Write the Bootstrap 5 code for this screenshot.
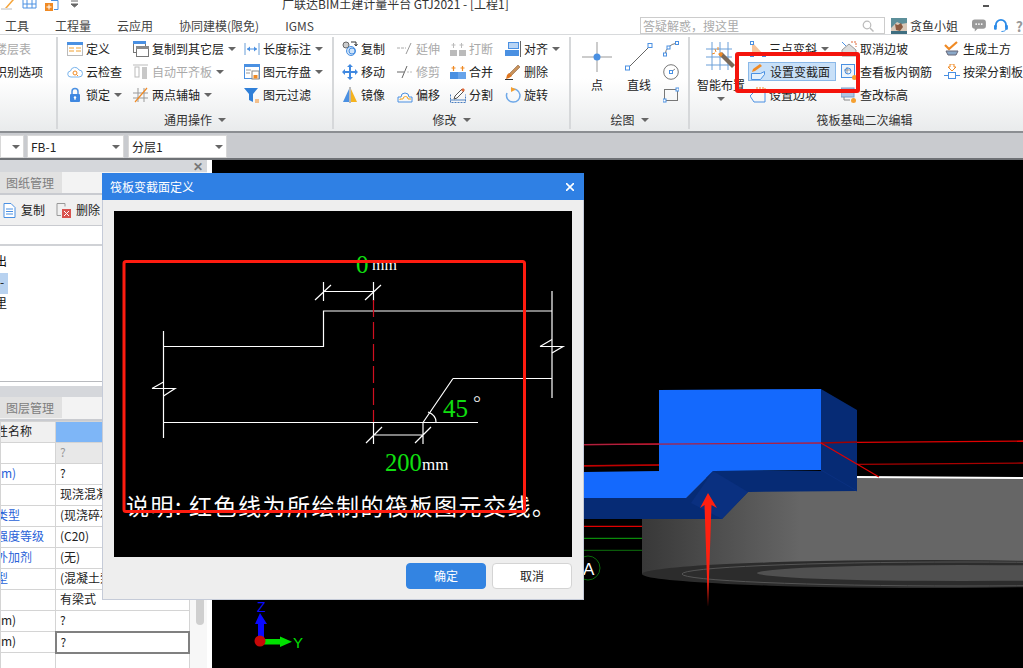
<!DOCTYPE html>
<html lang="zh-CN">
<head>
    <meta charset="UTF-8">
    <meta name="viewport" content="width=device-width, initial-scale=1.0">
    <link href="https://cdn.jsdelivr.net/npm/bootstrap@5.3.5/dist/css/bootstrap.min.css" rel="stylesheet">
    <title>广联达BIM土建计量平台 GTJ2021</title>

    <style>
        html, body { height: 100%; }
        body {
            font-family: "Noto Sans CJK SC", "Liberation Sans", sans-serif;
            font-size: 12px;
            line-height: 16px;
            color: #222;
            background: #fff;
            overflow: hidden;
        }
        .app { width: 1023px; height: 668px; position: relative; overflow: hidden; }

        /* title + menu */
        .title-row { height: 17px; position: relative; }
        .qa-icons { width: 282px; height: 10px; gap: 8px; }
        .qa-icons svg { flex: none; }
        .title-text { line-height: 8px; color: #333; white-space: nowrap; }
        .min-dash { width: 6px; height: 2px; background: #555; margin: 5px 0 0 474px; }
        .menu-row { height: 17px; padding-left: 5px; gap: 26px; color: #444; }
        .right-tools { margin-left: auto; width: 383px; flex: none; }
        .search-box { width: 245px; height: 17px; border: 1px solid #ccc; padding-right: 10px; flex: none; }
        .search-box input { border: 0; padding: 0 2px; height: 15px; font-size: 12px; line-height: 15px; box-shadow: none; border-radius: 0; background: transparent; }
        .search-box input::placeholder { color: #aaa; }
        .search-box svg { flex: none; }
        .avatar-pic { margin: 0 3px 0 6px; flex: none; }
        .user-name { font-size: 12px; color: #333; width: 62px; flex: none; }
        .help-mark { color: #999; font-weight: 700; font-size: 14px; margin-left: 8px; }

        /* ribbon */
        .ribbon { height: 99px; background: linear-gradient(#fff 45%, #e9ebec); border-top: 1px solid #d8dadc; border-bottom: 2px solid #8b8e92; }
        .rb-group { border-right: 2px solid #d6d8da; flex: none; height: 92px; margin-top: 2px; }
        .rb-cols { height: 71px; }
        .rb-col { flex: none; }
        .rb-item { height: 23px; gap: 3px; white-space: nowrap; }
        .rb-item.off { color: #a9a9a9; }
        .ic { width: 16px; height: 16px; flex: none; }
        .rb-label { height: 24px; gap: 3px; color: #333; }
        .rb-big { flex: none; padding-top: 5px; }
        .rb-big svg { width: 30px; height: 30px; margin-bottom: 5px; }
        .caret-dn { width: 0; height: 0; border-left: 4px solid transparent; border-right: 4px solid transparent; border-top: 4px solid #666; flex: none; margin-left: 1px; }
        .rb-label .caret-dn { margin-left: 3px; }
        .rb-on { background: #c8e0f8; border: 1px solid #8ab8e8; height: 19px; margin: 2px 0; width: 88px; }
        .g0 { width: 58px; overflow: hidden; }
        .g1 { width: 276px; }
        .g2 { width: 237px; }
        .g3 { width: 119px; }
        .g4 { width: 333px; border-right: 0; }
        .pl-g1 { padding-left: 9px; }
        .pl-g2 { padding-left: 8px; }
        .w-66 { width: 66px; }
        .w-111 { width: 111px; }
        .w-55 { width: 55px; }
        .w-53 { width: 53px; }
        .w-52 { width: 52px; }
        .w-32 { width: 32px; }
        .w-58 { width: 58px; padding-left: 4px; }
        .w-93 { width: 93px; }
        .w-103 { width: 103px; }
        .ml-8 { margin-left: 8px; }
        .pl-2px .rb-item { padding-left: 2px; }
        .lbl-shift { padding-left: 16px; }
        .cut-l { margin-left: -5px; }
        .mark-box { position: absolute; left: 735px; top: 52px; width: 125px; height: 41px; border: 4px solid #f4140c; border-radius: 3px; }

        /* combo strip */
        .combo-strip { height: 27px; background: #c9cbcf; border-bottom: 2px solid #6f7276; padding-top: 2px; gap: 4px; }
        .combo-box { height: 23px; background: #fff; border: 1px solid #d8d8d8; padding: 0 3px; color: #222; flex: none; }
        .combo-a { width: 24px; }
        .combo-b { width: 97px; margin-left: -1px; }
        .combo-c { width: 99px; }

        /* left panel */
        .main-row { height: 508px; }
        .left-panel { width: 212px; flex: none; background: #fff; }
        .dock-head { height: 12px; width: 207px; background: #d5d7db; font-size: 12px; line-height: 12px; color: #777; padding-right: 4px; font-weight: 700; }
        .tab-bar { height: 23px; width: 207px; background: #f3f3f3; border-bottom: 2px solid #c9cbd0; }
        .tab-one { width: 62px; height: 21px; background: #e1e1e1; color: #7d7d7d; padding-left: 6px; line-height: 21px; font-size: 12px; }
        .tool-bar { height: 31px; width: 207px; background: #f0f0f0; border-bottom: 1px solid #c9cbd0; padding-left: 3px; }
        .tool-bar .rb-item { gap: 5px; margin-right: 11px; }
        .blank-row { height: 20px; width: 207px; border-bottom: 2px solid #d0d2d6; }
        .tree-box { height: 136px; width: 207px; border-bottom: 1px solid #b8babe; padding-top: 6px; color: #111; }
        .tree-row { height: 21px; line-height: 17px; overflow: hidden; }
        .tree-on { background: #b8d2f0; width: 8px; }
        .gap-row { height: 4px; }
        .dock-head2 { height: 11px; width: 207px; background: #d5d7db; }
        .tab-bar2 { height: 24px; }
        .prop-wrap { height: 247px; }
        .prop-tbl { width: 190px; table-layout: fixed; font-size: 12px; border-color: #d4d4d4; margin: 0; flex: none; }
        .prop-tbl td { height: 21px; padding: 0 0 0 4px; line-height: 18px; white-space: nowrap; overflow: hidden; color: #222; }
        .prop-tbl td:first-child { padding-left: 0; }
        .prop-tbl .name-col { width: 55px; }
        .prop-tbl .link-name { color: #2a62d8; }
        .prop-tbl .head-name { background: #f0f0f0; }
        .prop-tbl .head-val { background: #7eb6f7; }
        .prop-tbl .grey-cell { background: #e8e8e8; color: #999; }
        .prop-tbl .cell-sel { border: 2px solid #808080 !important; }
        .prop-tbl .tail-row td { height: 20px; }
        .scroll-col { width: 17px; padding-left: 6px; background: #f7f7f7; flex: none; }
        .scroll-thumb { width: 8px; height: 204px; background: #cfcfcf; border-radius: 0 0 4px 4px; }

        /* canvas */
        .view-3d { flex: 1 1 auto; background: #000; }
        .view-3d svg { display: block; }
        .t-axis { font-family: "Liberation Sans", sans-serif; }

        /* dialog */
        .dlg { position: absolute; left: 102px; top: 173px; width: 482px; height: 427px; background: #eeeeee; border: 1px solid #c5cbd8; border-radius: 0; border-top: 0; }
        .dlg .card-header { height: 27px; padding: 0 10px 0 8px; background: #2f80e4; color: #fff; border: 0; border-radius: 0; margin: 0 -1px; line-height: 27px; }
        .dlg .card-body { padding: 11px 11px 0; flex: none; }
        .dlg-draw { display: block; background: #000; }
        .dlg-foot { padding: 6px 11px 0 0; gap: 6px; }
        .dlg-foot .btn { width: 80px; height: 26px; padding: 0; font-size: 12px; line-height: 24px; border-radius: 4px; }
        .btn-ok { background: #3384e2; border-color: #3384e2; color: #fff; }
        .btn-no { background: #fff; border-color: #d4d4d4; color: #222; }
        .draw-line { stroke: #fff; stroke-width: 1.2; fill: none; }
        .t-serif { font-family: "Liberation Serif", serif; }
        .t-note { font-family: "Noto Sans CJK SC", "Liberation Serif", serif; font-size: 23px; letter-spacing: 1.5px; fill: #fff; }
    </style>
</head>
<body>
<div class="app">

    <!-- title row, cut off at the top of the shot -->
    <div class="title-row d-flex">
        <div class="qa-icons d-flex">
            <svg width="14" height="10" viewBox="0 0 14 10"><path d="M1 9h11" stroke="#bbb"/><path d="M5 8l7-8h2l-7 8z" fill="#f5a43a"/></svg>
            <svg width="15" height="10" viewBox="0 0 15 10"><path d="M1 0v8h13V0M5 0v8M10 0v8M1 4h13" fill="none" stroke="#4a90e2"/></svg>
            <svg width="14" height="11" viewBox="0 0 14 11"><path d="M6 .5h7v9H9" fill="none" stroke="#4a90e2"/><rect x="0" y="3" width="8" height="8" fill="#f08a24"/><path d="M4 4.5v5M1.5 7h5" stroke="#fff"/></svg>
            <svg width="8" height="10" viewBox="0 0 8 10" class="ms-1"><path d="M0 1h7M0 4l3.5 3L7 4z" fill="#666" stroke="#666"/></svg>
        </div>
        <div class="title-text">广联达BIM土建计量平台 GTJ2021 - [工程1]</div>
        <div class="min-dash"></div>
    </div>

    <!-- menu -->
    <div class="menu-row d-flex align-items-center">
        <span>工具</span><span>工程量</span><span>云应用</span><span>协同建模(限免)</span><span>IGMS</span>
        <div class="right-tools d-flex align-items-center">
            <div class="search-box d-flex align-items-center">
                <input class="form-control" type="text" placeholder="答疑解惑，搜这里">
                <svg width="12" height="12" viewBox="0 0 12 12"><circle cx="5" cy="5" r="3.8" fill="none" stroke="#bbb" stroke-width="1.2"/><path d="M8 8l3.5 3.5" stroke="#bbb" stroke-width="1.5"/></svg>
            </div>
            <svg width="16" height="16" viewBox="0 0 16 16" class="avatar-pic"><rect width="16" height="16" fill="#5c8f9a"/><path d="M0 10l6-6 4 2 6-1v11H0z" fill="#d8c8b8"/><path d="M4 6l3 1 3-2 2 4-3 4-4-1z" fill="#8a5a40"/><rect y="13" width="16" height="3" fill="#3e6e80"/></svg>
            <span class="user-name">贪鱼小姐</span>
            <svg width="15" height="13" viewBox="0 0 15 13"><path d="M3 0h9a3 3 0 013 3v4a3 3 0 01-3 3H6l-3 3v-3a3 3 0 01-3-3V3a3 3 0 013-3z" fill="#999"/><circle cx="4.5" cy="5" r="1" fill="#fff"/><circle cx="7.5" cy="5" r="1" fill="#fff"/><circle cx="10.5" cy="5" r="1" fill="#fff"/></svg>
            <svg width="15" height="15" viewBox="0 0 15 15" class="ms-2"><path d="M2 9V7a5.5 5.5 0 0111 0v2" fill="none" stroke="#2b8be8" stroke-width="2"/><rect x="0" y="7" width="3" height="5" rx="1" fill="#2b8be8"/><rect x="12" y="7" width="3" height="5" rx="1" fill="#2b8be8"/><path d="M13 11c0 2-2 3-5 3" fill="none" stroke="#2b8be8"/></svg>
            <span class="help-mark">?</span>
        </div>
    </div>

    <!-- ribbon -->
    <div class="ribbon d-flex position-relative">
        <div class="rb-group g0">
            <div class="rb-item off d-flex align-items-center"><span class="cut-l">楼层表</span></div>
            <div class="rb-item d-flex align-items-center"><span class="cut-l">识别选项</span></div>
        </div>

        <div class="rb-group g1">
            <div class="rb-cols d-flex pl-g1">
                <div class="rb-col w-66">
                    <div class="rb-item d-flex align-items-center">
                        <svg class="ic" viewBox="0 0 16 16"><rect x=".5" y="1.5" width="15" height="13" fill="#fff" stroke="#bbb"/><rect y="1" width="16" height="3" fill="#4a90e2"/><path d="M2 7h5M2 10h5M9 7h5M9 10h5" stroke="#f0a030"/></svg>定义
                    </div>
                    <div class="rb-item d-flex align-items-center">
                        <svg class="ic" viewBox="0 0 16 16"><path d="M4 13a3 3 0 01-.5-6A4.5 4.5 0 0112 6a3.5 3.5 0 010 7z" fill="#fff" stroke="#7ab4ec"/><circle cx="8" cy="9" r="2" fill="none" stroke="#f08a24"/><path d="M9.5 10.5l1.5 1.5" stroke="#f08a24"/></svg>云检查
                    </div>
                    <div class="rb-item d-flex align-items-center">
                        <svg class="ic" viewBox="0 0 16 16"><path d="M5 7V4.5a3 3 0 016 0V7" fill="none" stroke="#4a90e2" stroke-width="1.5"/><rect x="3" y="7" width="10" height="8" rx="1" fill="#3f88e0"/><circle cx="8" cy="10.5" r="1.2" fill="#fff"/><path d="M8 11v2" stroke="#fff"/></svg>锁定<span class="caret-dn"></span>
                    </div>
                </div>
                <div class="rb-col w-111">
                    <div class="rb-item d-flex align-items-center">
                        <svg class="ic" viewBox="0 0 16 16"><rect x=".5" y=".5" width="12" height="11" fill="#fff" stroke="#777"/><rect width="13" height="3" fill="#4a90e2"/><rect x="3.5" y="5.5" width="12" height="10" fill="#fff" stroke="#777"/><rect x="3" y="5" width="13" height="3" fill="#8a8a8a"/></svg>复制到其它层<span class="caret-dn"></span>
                    </div>
                    <div class="rb-item off d-flex align-items-center">
                        <svg class="ic" viewBox="0 0 16 16"><path d="M0 1h15" stroke="#bbb"/><rect x="2" y="3" width="4" height="10" fill="#fff" stroke="#bbb"/><rect x="9" y="3" width="5" height="12" fill="#c8c8c8"/></svg>自动平齐板<span class="caret-dn"></span>
                    </div>
                    <div class="rb-item d-flex align-items-center">
                        <svg class="ic" viewBox="0 0 16 16"><path d="M0 6h15M0 11h15M5 1v14M11 1v14" stroke="#999"/><path d="M2 15L14 1" stroke="#f08a24" stroke-width="1.2"/></svg>两点辅轴<span class="caret-dn"></span>
                    </div>
                </div>
                <div class="rb-col">
                    <div class="rb-item d-flex align-items-center">
                        <svg class="ic" viewBox="0 0 16 16"><path d="M1 2v12M15 2v12" stroke="#6a9fd8"/><path d="M3 8h10" stroke="#4a90e2"/><path d="M3 8l3-2.5v5zM13 8l-3-2.5v5z" fill="#4a90e2"/></svg>长度标注<span class="caret-dn"></span>
                    </div>
                    <div class="rb-item d-flex align-items-center">
                        <svg class="ic" viewBox="0 0 16 16"><rect x=".5" y=".5" width="15" height="14" fill="#fff" stroke="#4a90e2"/><rect width="16" height="3" fill="#4a90e2"/><path d="M2 6h5M2 9h4" stroke="#999"/><rect x="8" y="7" width="7" height="8" fill="#fff" stroke="#888"/><rect x="9.5" y="11" width="4" height="3.5" fill="#f08a24"/></svg>图元存盘<span class="caret-dn"></span>
                    </div>
                    <div class="rb-item d-flex align-items-center">
                        <svg class="ic" viewBox="0 0 16 16"><path d="M0 1h14L9 7v8L5 13V7z" fill="#2f7fd8"/><path d="M11 13h4M11 15h4" stroke="#f08a24" stroke-width="1.2"/></svg>图元过滤
                    </div>
                </div>
            </div>
            <div class="rb-label d-flex align-items-center justify-content-center">通用操作<span class="caret-dn"></span></div>
        </div>

        <div class="rb-group g2">
            <div class="rb-cols d-flex pl-g2">
                <div class="rb-col w-55">
                    <div class="rb-item d-flex align-items-center">
                        <svg class="ic" viewBox="0 0 16 16"><circle cx="4" cy="4" r="3" fill="#ccc" stroke="#666"/><circle cx="9" cy="10" r="4.5" fill="#cfe3f8" stroke="#4a90e2"/><circle cx="10" cy="10" r="3" fill="none" stroke="#4a90e2"/><path d="M9 1h5v3M12.5 3L14 5l1.5-2" fill="none" stroke="#333"/></svg>复制
                    </div>
                    <div class="rb-item d-flex align-items-center">
                        <svg class="ic" viewBox="0 0 16 16"><path d="M8 0l3 3H9v4h4V5l3 3-3 3V9H9v4h2l-3 3-3-3h2V9H3v2L0 8l3-3v2h4V3H5z" fill="#3f88e0"/></svg>移动
                    </div>
                    <div class="rb-item d-flex align-items-center">
                        <svg class="ic" viewBox="0 0 16 16"><path d="M7 2L1 15h6z" fill="#4a90e2"/><path d="M9 2l6 13H9z" fill="#f5b31f"/><path d="M8 0v16" stroke="#777"/></svg>镜像
                    </div>
                </div>
                <div class="rb-col w-53">
                    <div class="rb-item off d-flex align-items-center">
                        <svg class="ic" viewBox="0 0 16 16"><path d="M0 7h9" stroke="#aaa" stroke-dasharray="3 1"/><path d="M9 13L14 2" stroke="#999"/></svg>延伸
                    </div>
                    <div class="rb-item off d-flex align-items-center">
                        <svg class="ic" viewBox="0 0 16 16"><path d="M0 8h7" stroke="#666"/><path d="M10 8h6" stroke="#bbb" stroke-dasharray="2 1"/><path d="M5 14L10 2" stroke="#666"/></svg>修剪
                    </div>
                    <div class="rb-item d-flex align-items-center">
                        <svg class="ic" viewBox="0 0 16 16"><path d="M1 15V10h3a4 4 0 018 0h3v5z" fill="none" stroke="#4a90e2"/><path d="M3 13v-1h3a2.5 2.5 0 015 0h3" fill="none" stroke="#f5a623"/></svg>偏移
                    </div>
                </div>
                <div class="rb-col w-55">
                    <div class="rb-item off d-flex align-items-center">
                        <svg class="ic" viewBox="0 0 16 16"><rect y="9" width="7" height="6" fill="#bbb"/><rect x="9" y="9" width="7" height="6" fill="#bbb"/><path d="M3.5 2v5M11.5 2v5M1.5 4h4M9.5 4h4" stroke="#bbb"/></svg>打断
                    </div>
                    <div class="rb-item d-flex align-items-center">
                        <svg class="ic" viewBox="0 0 16 16"><rect y="8" width="8" height="7" fill="#4a90e2"/><rect x="8" y="8" width="8" height="7" fill="#68a4ea"/><path d="M3.5 2v5M12.5 2v5M1.5 4h4M10.5 4h4" stroke="#f08a24" stroke-width="1.2"/></svg>合并
                    </div>
                    <div class="rb-item d-flex align-items-center">
                        <svg class="ic" viewBox="0 0 16 16"><path d="M.5 7.5v8h15v-8" fill="none" stroke="#4a7fc0" stroke-dasharray="2 1"/><path d="M0 13h16" stroke="#4a7fc0"/><path d="M4 12l1-3 7-7 2 2-7 7z" fill="#fff" stroke="#555"/><path d="M11 3l2-2 2 2-2 2z" fill="#e06a3a"/></svg>分割
                    </div>
                </div>
                <div class="rb-col">
                    <div class="rb-item d-flex align-items-center">
                        <svg class="ic" viewBox="0 0 16 16"><rect x="3.5" y="1.5" width="10" height="6" fill="#b8d4f4" stroke="#4a90e2"/><rect y="9" width="14" height="6" fill="#4a90e2"/><path d="M15.5 0v16" stroke="#666"/></svg>对齐<span class="caret-dn"></span>
                    </div>
                    <div class="rb-item d-flex align-items-center">
                        <svg class="ic" viewBox="0 0 16 16"><path d="M4 10l9-9 2 2-9 9z" fill="#c9925a" stroke="#7a5230" stroke-width=".5"/><path d="M2 11l2-2 3 3-3 2-3 1z" fill="#e0761f"/><path d="M0 15.5h8" stroke="#333"/></svg>删除
                    </div>
                    <div class="rb-item d-flex align-items-center">
                        <svg class="ic" viewBox="0 0 16 16"><path d="M6 2.5A6.5 6.5 0 118 15a6.5 6.5 0 01-6-9" fill="none" stroke="#6ea8e8" stroke-width="1.5"/><path d="M6 0l5 2.5L6 5z" fill="#f5a030"/></svg>旋转
                    </div>
                </div>
            </div>
            <div class="rb-label d-flex align-items-center justify-content-center">修改<span class="caret-dn"></span></div>
        </div>

        <div class="rb-group g3">
            <div class="rb-cols d-flex">
                <div class="rb-big w-52 d-flex flex-column align-items-center">
                    <svg viewBox="0 0 30 30"><path d="M0 15h30M15 0v30" stroke="#999"/><circle cx="15" cy="15" r="3.5" fill="#4a90e2"/></svg>点
                </div>
                <div class="rb-big w-32 d-flex flex-column align-items-center">
                    <svg viewBox="0 0 30 30"><path d="M4 26L26 4" stroke="#666"/><rect x="1.5" y="24" width="4" height="4" fill="#fff" stroke="#4a90e2"/><rect x="24" y="1.5" width="4" height="4" fill="#fff" stroke="#4a90e2"/></svg>直线
                </div>
                <div class="rb-col ml-8">
                    <div class="rb-item d-flex align-items-center">
                        <svg class="ic" viewBox="0 0 16 16"><path d="M2 14Q3 4 14 2" fill="none" stroke="#777"/><rect x=".5" y="12" width="3" height="3" fill="#fff" stroke="#4a90e2"/><rect x="4" y="5" width="3" height="3" fill="#fff" stroke="#4a90e2"/><rect x="12.5" y=".5" width="3" height="3" fill="#fff" stroke="#4a90e2"/></svg>
                    </div>
                    <div class="rb-item d-flex align-items-center">
                        <svg class="ic" viewBox="0 0 16 16"><circle cx="8" cy="8" r="7.3" fill="none" stroke="#777"/><path d="M8 8l4-3" stroke="#888"/><rect x="6.5" y="6.5" width="3" height="3" fill="#fff" stroke="#4a90e2"/></svg>
                    </div>
                    <div class="rb-item d-flex align-items-center">
                        <svg class="ic" viewBox="0 0 16 16"><rect x="1.5" y="2.5" width="13" height="11" fill="none" stroke="#777"/><rect y="12" width="3" height="3" fill="#fff" stroke="#4a90e2"/><rect x="13" y="1" width="3" height="3" fill="#fff" stroke="#4a90e2"/></svg>
                    </div>
                </div>
            </div>
            <div class="rb-label d-flex align-items-center justify-content-center">绘图<span class="caret-dn"></span></div>
        </div>

        <div class="rb-group g4">
            <div class="rb-cols d-flex">
                <div class="rb-big w-58 d-flex flex-column align-items-center text-nowrap">
                    <svg viewBox="0 0 30 30"><path d="M0 7h26M0 15h26M0 23h26M6 0v28M14 0v28M22 0v28" stroke="#6a9fd8"/><path d="M13 13l3-3 13 13-3 3z" fill="#7a6a5a"/><path d="M12 12l3-2 2 2-2 3z" fill="#f08a24"/><path d="M9 7l1 3M6 12l3-1M12 5l0 3" stroke="#f08a24"/></svg>
                    <span>智能布置</span><span class="caret-dn mt-1 ms-0"></span>
                </div>
                <div class="rb-col w-93 pl-2px">
                    <div class="rb-item d-flex align-items-center">
                        <svg class="ic" viewBox="0 0 16 16"><path d="M2 1v14h13z" fill="#f6c39a"/><rect x=".5" y=".5" width="3" height="3" fill="#fff" stroke="#4a90e2"/><rect x=".5" y="12.5" width="3" height="3" fill="#fff" stroke="#4a90e2"/><rect x="12.5" y="12.5" width="3" height="3" fill="#fff" stroke="#4a90e2"/></svg>三点变斜<span class="caret-dn"></span>
                    </div>
                    <div class="rb-item rb-on d-flex align-items-center">
                        <svg class="ic" viewBox="0 0 16 16"><path d="M.5 15.5V9.500h9l4-2v3l-4 5z" fill="#e3f0fc" stroke="#4a90e2"/><path d="M1 8l1-3 7-5 2 2-7 5z" fill="#f08a24"/></svg>设置变截面
                    </div>
                    <div class="rb-item d-flex align-items-center">
                        <svg class="ic" viewBox="0 0 16 16"><path d="M0 9l4-4h11v10H4z" fill="none" stroke="#4a90e2"/><path d="M6 1h9v5" fill="none" stroke="#f08a24" stroke-dasharray="2 1"/></svg>设置边坡
                    </div>
                </div>
                <div class="rb-col w-103">
                    <div class="rb-item d-flex align-items-center">
                        <svg class="ic" viewBox="0 0 16 16"><path d="M1 9l7-6 7 6v6H1z" fill="#dcdcdc" stroke="#999"/><path d="M1 1l4 4" stroke="#4a90e2"/><path d="M10 1h5v5" fill="none" stroke="#e06a3a" stroke-dasharray="2 1"/></svg>取消边坡
                    </div>
                    <div class="rb-item d-flex align-items-center">
                        <svg class="ic" viewBox="0 0 16 16"><rect x=".5" y=".5" width="13" height="13" fill="#eef5fc" stroke="#4a90e2"/><path d="M6 3v7M3 6h7" stroke="#999"/><circle cx="7" cy="7" r="3" fill="none" stroke="#4a90e2"/><circle cx="13.5" cy="13.5" r="2.5" fill="#f5a030"/></svg>查看板内钢筋
                    </div>
                    <div class="rb-item d-flex align-items-center">
                        <svg class="ic" viewBox="0 0 16 16"><rect y="1" width="13" height="9" fill="#aec6e4" stroke="#7a9cc6"/><path d="M3 10v3h6" fill="none" stroke="#888"/><circle cx="12.5" cy="13.5" r="2.5" fill="#f5a030"/></svg>查改标高
                    </div>
                </div>
                <div class="rb-col">
                    <div class="rb-item d-flex align-items-center">
                        <svg class="ic" viewBox="0 0 16 16"><path d="M1 4l4 4 8-7" fill="none" stroke="#f08a24" stroke-width="2.2"/><path d="M2 10h12l-2 4H4z" fill="#8aa8c8" stroke="#667"/></svg>生成土方
                    </div>
                    <div class="rb-item d-flex align-items-center">
                        <svg class="ic" viewBox="0 0 16 16"><path d="M6 0h4v3h2L8 7 4 3h2z" fill="none" stroke="#f08a24"/><rect x="4.5" y="8.5" width="7" height="6" fill="#fff" stroke="#4a90e2"/><path d="M0 11.5h4M12 11.5h4" stroke="#4a90e2"/></svg>按梁分割板
                    </div>
                </div>
            </div>
            <div class="rb-label lbl-shift d-flex align-items-center justify-content-center">筏板基础二次编辑</div>
        </div>
    </div>

    <!-- combos -->
    <div class="combo-strip d-flex">
        <div class="combo-box combo-a d-flex align-items-center justify-content-end"><span class="caret-dn"></span></div>
        <div class="combo-box combo-b d-flex align-items-center justify-content-between">FB-1<span class="caret-dn"></span></div>
        <div class="combo-box combo-c d-flex align-items-center justify-content-between">分层1<span class="caret-dn"></span></div>
    </div>

    <div class="main-row d-flex">
        <!-- left dock -->
        <div class="left-panel">
            <div class="dock-head d-flex justify-content-end">✕</div>
            <div class="tab-bar"><div class="tab-one">图纸管理</div></div>
            <div class="tool-bar d-flex align-items-center">
                <div class="rb-item d-flex align-items-center">
                    <svg width="13" height="15" viewBox="0 0 13 15"><path d="M1 .5h7l4 4v10H1z" fill="#fff" stroke="#4a90e2"/><path d="M3 6h7M3 8.5h7M3 11h7" stroke="#4a90e2"/></svg>复制
                </div>
                <div class="rb-item d-flex align-items-center">
                    <svg width="15" height="15" viewBox="0 0 15 15"><path d="M1 .5h8v3M1 .5v12h4" fill="none" stroke="#999"/><rect x="6" y="6" width="9" height="9" fill="#d9534f"/><path d="M8 8l5 5M13 8l-5 5" stroke="#fff"/></svg>删除
                </div>
            </div>
            <div class="blank-row"></div>
            <div class="tree-box">
                <div class="tree-row"><span class="cut-l d-inline-block">出</span></div>
                <div class="tree-row tree-on"><span class="d-inline-block">-</span></div>
                <div class="tree-row"><span class="cut-l d-inline-block">里</span></div>
            </div>
            <div class="gap-row"></div>
            <div class="dock-head2"></div>
            <div class="tab-bar tab-bar2"><div class="tab-one">图层管理</div></div>
            <div class="prop-wrap d-flex">
                <table class="table table-bordered prop-tbl">
                    <colgroup><col class="name-col"><col></colgroup>
                    <tbody>
                        <tr><td class="head-name"><span class="cut-l d-inline-block">性名称</span></td><td class="head-val"></td></tr>
                        <tr><td></td><td class="grey-cell">?</td></tr>
                        <tr><td class="link-name">m)</td><td>?</td></tr>
                        <tr><td></td><td>现浇混凝土</td></tr>
                        <tr><td class="link-name"><span class="cut-l d-inline-block">类型</span></td><td>(现浇碎石混凝土)</td></tr>
                        <tr><td class="link-name"><span class="cut-l d-inline-block">强度等级</span></td><td>(C20)</td></tr>
                        <tr><td class="link-name"><span class="cut-l d-inline-block">外加剂</span></td><td>(无)</td></tr>
                        <tr><td class="link-name"><span class="cut-l d-inline-block">型</span></td><td>(混凝土泵)</td></tr>
                        <tr><td></td><td>有梁式</td></tr>
                        <tr><td>m)</td><td>?</td></tr>
                        <tr><td>m)</td><td class="cell-sel">?</td></tr>
                        <tr class="tail-row"><td></td><td></td></tr>
                    </tbody>
                </table>
                <div class="scroll-col"><div class="scroll-thumb"></div></div>
            </div>
        </div>

        <!-- 3d view, coordinates in the viewBox are those of the screen -->
        <div class="view-3d">
            <svg width="811" height="508" viewBox="212 160 811 508">
                <defs>
                    <linearGradient id="cylFill" gradientUnits="userSpaceOnUse" x1="642" y1="0" x2="800" y2="0">
                        <stop offset="0" stop-color="#383838"/>
                        <stop offset="1" stop-color="#666"/>
                    </linearGradient>
                </defs>
                <path d="M584 444.7L1023 441" stroke="#e00000" stroke-width="1.3"/>
                <path d="M584 466L659 465M857 464.3L1023 463" stroke="#a80000" stroke-width="1.3"/>
                <path d="M584 526.3H642" stroke="#e00000" stroke-width="1.3"/>
                <path d="M584 538.3H642" stroke="#0a8a0a" stroke-width="1.3"/>
                <path d="M584 550.3H642" stroke="#0a5a0a" stroke-width="1.3"/>
                <circle cx="588" cy="568" r="12" fill="none" stroke="#0a6a0a"/>
                <text x="583" y="575" fill="#fff" font-size="17" class="t-axis">A</text>

                <path d="M642 478H1023V574H642z" fill="url(#cylFill)"/>
                <ellipse cx="930" cy="574" rx="288" ry="14" fill="#2c2c2c"/>
                <ellipse cx="962" cy="574" rx="280" ry="12" fill="none" stroke="#555"/>
                <ellipse cx="962" cy="573" rx="205" ry="8" fill="#505050"/>
                <path d="M857 477L1023 478" stroke="#fff" stroke-width="2"/>

                <!-- dark faces -->
                <path d="M584 498H686L713 471H821V389L857 410V491L748 492L722 519H584z" fill="#062b75"/>
                <path d="M713 471L748 492L722 519L691 503z" fill="#0a3080"/>
                <!-- light faces -->
                <path d="M659 390L821 389V470L713 471L686 498H584V472L659 471z" fill="#1469fd"/>
                <path d="M821 470L857 491" stroke="#0a3080"/>
                <path d="M584 444.7L821 443" stroke="#b02040" stroke-width="1.3"/>
                <path d="M821 443L857 442" stroke="#a00000" stroke-width="1.3"/>
                <path d="M821 443L879 477" stroke="#e00000" stroke-width="1.2"/>
                <path d="M584 465.7L659 465" stroke="#c00000" stroke-width="1.2"/>

                <!-- markup arrow -->
                <path d="M708 493L717 508L711.5 505L708 607L704.5 505L700 508z" fill="#ff2010"/>

                <!-- axes -->
                <path d="M260 613L267 624H264V640H258V624H255z" fill="#0a0aff"/>
                <text x="257" y="612" fill="#0a0aff" font-size="14" class="t-axis">Z</text>
                <path d="M264 639H280V636.5L292 641.7L280 647V644.5H264z" fill="#00e000"/>
                <text x="293" y="648" fill="#00e000" font-size="15" class="t-axis">Y</text>
                <circle cx="260" cy="641" r="5.5" fill="#c80808"/>
            </svg>
        </div>
    </div>

    <!-- dialog -->
    <div class="dlg card">
        <div class="card-header d-flex justify-content-between align-items-center">
            <span>筏板变截面定义</span>
            <svg width="8" height="8" viewBox="0 0 8 8"><path d="M0 0l8 8M8 0L0 8" stroke="#fff" stroke-width="1.6"/></svg>
        </div>
        <div class="card-body">
            <svg class="dlg-draw" width="458" height="346" viewBox="114 211 458 346">
                <path class="draw-line" d="M163.5 331V438M163.5 346.5H323.5V311H552M552 291V398M453 378.5H552M453 378.5L423 422.5M163.5 422.5H478"/>
                <path class="draw-line" d="M323.5 282V301M373.5 282V301M323.5 291.5H373.5M315 300L331 285M365 300L381 285"/>
                <path class="draw-line" d="M373.5 422V444M423 422V444M373.5 435H423M366 443L382 427M415 443L431 427"/>
                <path class="draw-line" d="M428 412Q436 415 436 422"/>
                <path class="draw-line" d="M152 388.5H175L163.5 396M152 388.5L163.5 382M540 346.5H563L552 353M540 346.5L552 339.5"/>
                <path d="M373.5 300V422" stroke="#d01020" stroke-width="1.2" stroke-dasharray="17 5"/>
                <text x="356" y="273" fill="#10e010" font-size="25" class="t-serif">0</text>
                <text x="372" y="270" fill="#fff" font-size="16" class="t-serif">mm</text>
                <text x="443" y="417" fill="#10e010" font-size="25" class="t-serif">45</text>
                <text x="473" y="410" fill="#ddd" font-size="20" class="t-serif">°</text>
                <text x="385" y="471" fill="#10e010" font-size="24.5" class="t-serif">200</text>
                <text x="422" y="470" fill="#fff" font-size="17" class="t-serif">mm</text>
                <text x="126" y="515" class="t-note">说明:<tspan dx="6">红色线为所绘制的筏板图元交线。</tspan></text>
                <rect x="124" y="261.5" width="400.5" height="250" rx="2" fill="none" stroke="#ff1c10" stroke-width="3"/>
            </svg>
        </div>
        <div class="dlg-foot d-flex justify-content-end">
            <button type="button" class="btn btn-ok">确定</button>
            <button type="button" class="btn btn-no">取消</button>
        </div>
    </div>

    <div class="mark-box"></div>
</div>

<script src="https://cdn.jsdelivr.net/npm/bootstrap@5.3.5/dist/js/bootstrap.bundle.min.js"></script>
</body>
</html>
